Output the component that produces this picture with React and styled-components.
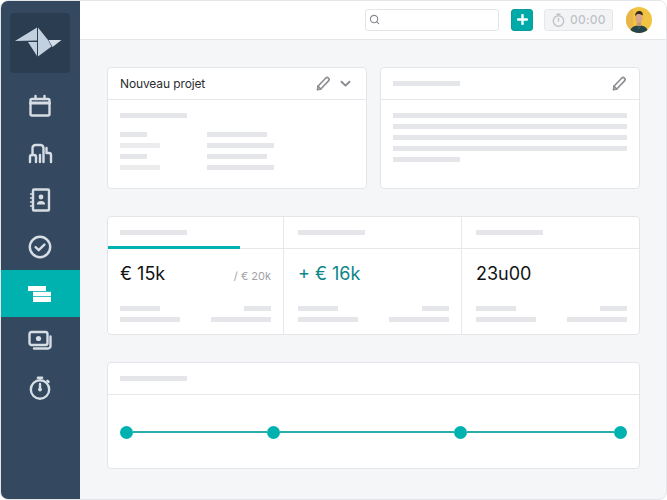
import React from "react";
import styled, { createGlobalStyle } from "styled-components";
import { Search } from "lucide-react";

const Global = createGlobalStyle`
  * { box-sizing: border-box; }
  html, body { margin: 0; padding: 0; background: #fff; }
  body { font-family: Inter, "Liberation Sans", sans-serif; }
`;

const Frame = styled.div`
  width: 667px; height: 500px; display: flex;
  border: 1px solid #e3e5e9; border-radius: 8px; overflow: hidden; background: #f5f6f8;
`;
const Sidebar = styled.nav`
  width: 79px; flex: none; background: #34495f; display: flex; flex-direction: column; padding-top: 12px;
`;
const LogoBox = styled.div`
  width: 60px; height: 60px; margin: 0 0 9px 9px; border-radius: 4px; background: #2b3d50;
  display: flex; align-items: center; justify-content: center;
`;
const NavItem = styled.div`
  height: 47px; display: flex; align-items: center; justify-content: center; padding-right: 1px;
  color: ${p => (p.$active ? "#fff" : "#d6dde5")};
  background: ${p => (p.$active ? "#00b2af" : "transparent")};
`;
const Main = styled.div`flex: 1; min-width: 0; display: flex; flex-direction: column;`;
const Topbar = styled.header`
  height: 39px; flex: none; background: #fff; border-bottom: 1px solid #e3e5e9;
  display: flex; align-items: center; padding: 0 14px 1px 285px;
`;
const SearchBox = styled.div`
  width: 134px; height: 22px; border: 1px solid #e3e5e9; border-radius: 3px; background: #fff;
  display: flex; align-items: center; padding-left: 3px; color: #85888d;
`;
const AddButton = styled.div`
  width: 22px; height: 22px; margin-left: 12px; border-radius: 3px; background: #00aaa8;
  border: 1px solid #0a9c9b; display: flex; align-items: center; justify-content: center;
`;
const Timer = styled.div`
  width: 69px; height: 22px; margin-left: 11px; border-radius: 3px; background: #f3f4f6;
  border: 1px solid #e5e7ea; display: flex; align-items: center; gap: 5px; padding-left: 7px;
  font-size: 12px; color: #c0c3c7; letter-spacing: 0.2px; font-weight: 500;
`;
const Avatar = styled.div`width: 26px; height: 26px; margin-left: 13px; flex: none; border-radius: 50%; overflow: hidden;`;

const Content = styled.main`flex: 1; padding: 27px 26px 0 27px; display: flex; flex-direction: column; gap: 27px;`;
const TwoCards = styled.div`display: grid; grid-template-columns: 260px 260px; gap: 13px;`;
const Card = styled.section`
  background: #fff; border: 1px solid #e3e5e9; border-radius: 4px; height: ${p => p.$h}px;
  display: flex; flex-direction: column; overflow: hidden;
`;
const CardHeader = styled.div`
  height: 32px; flex: none; border-bottom: 1px solid #e6e8eb; display: flex; align-items: center;
  padding: 0 ${p => p.$tight ? 15 : 12}px 0 12px; justify-content: space-between; gap: 9px;
`;
const Title = styled.h2`margin: 0; font-size: 12px; font-weight: 400; letter-spacing: -0.12px; color: #2a2d31; flex: 1;`;
const Bar = styled.div`
  height: 5px; width: ${p => p.$w ? `${p.$w}px` : "100%"}; background: ${p => p.$light ? "#ececee" : "#e5e6e9"}; flex: none;
`;
const CardBody = styled.div`padding: 13px 12px; display: flex; flex-direction: column; gap: 6px;`;
const DetailGrid = styled.div`display: grid; grid-template-columns: 87px 1fr; margin-top: 8px; row-gap: 6px;`;

const Stats = styled.div`display: grid; grid-template-columns: 176px 178px 1fr; flex: 1;`;
const Stat = styled.div`
  border-right: ${p => p.$last ? "none" : "1px solid #e6e8eb"}; display: flex; flex-direction: column;
`;
const StatHeader = styled.div`
  height: 32px; position: relative; border-bottom: 1px solid #e6e8eb; display: flex; align-items: center;
  padding-left: ${p => p.$first ? 12 : 14}px;
`;
const Progress = styled.div`
  position: absolute; left: 0; bottom: -1px; height: 3px; background: #00b2af;
`;
const StatBody = styled.div`
  flex: 1; padding: 14px 12px 11px ${p => p.$first ? 12 : 14}px; display: flex; flex-direction: column;
`;
const ValueRow = styled.div`display: flex; justify-content: space-between; align-items: baseline; height: 23px;`;
const Value = styled.div`
  font-size: 18px; line-height: 22px; color: ${p => p.$accent ? "#0c8688" : "#111315"}; font-weight: 400;
`;
const Budget = styled.div`font-size: 11px; color: #a0a2a6;`;
const FootRow = styled.div`display: flex; justify-content: space-between; margin-top: ${p => p.$mt}px;`;

const Stepper = styled.div`flex: 1; display: flex; align-items: center; padding: 1px 12px 0 12px;`;
const Dot = styled.div`width: 13px; height: 13px; border-radius: 50%; background: #00b2af; flex: none;`;
const Segment = styled.div`height: 2px; flex: ${p => p.$grow} 0 0; background: #2aaeab;`;

const I = ({ children, s = 26 }) => (
  <svg width={s} height={s} viewBox="0 0 26 26" fill="none" stroke="currentColor" strokeWidth="2.4" strokeLinecap="round" strokeLinejoin="round">{children}</svg>
);

const Logo = () => (
  <svg width="50" height="32" viewBox="0 0 50 32" fill="#c3d0df">
    <polygon points="0,14 22,0.5 22,13.6 0,14" />
    <polygon points="23,0.5 33,13 36.5,19.5 23,29.5" />
    <polygon points="13,15 22,15 22,29" />
    <polygon points="33.5,13 46.5,13 37.5,20" fill="#d3dde8" />
  </svg>
);

const Pencil = () => (
  <svg width="16" height="16" viewBox="0 0 16 16" fill="none" stroke="#8b8d92" strokeWidth="1.6" strokeLinejoin="round" strokeLinecap="round">
    <path d="M2.4 13.8 L2.9 10.2 L10.6 2.2 a1.9 1.9 0 0 1 2.9 2.7 L5.8 13 Z" />
    <path d="M2.9 10.2 L5.8 13" />
  </svg>
);
const Chevron = () => (
  <svg width="11" height="8" viewBox="0 0 11 8" fill="none" stroke="#8b8d92" strokeWidth="2" strokeLinecap="round" strokeLinejoin="round">
    <path d="M1.5 1.8 L5.5 5.6 L9.5 1.8" />
  </svg>
);

const icons = [
  <I key="cal"><rect x="3.500" y="6" width="19" height="16.500" rx="1.500" /><path d="M3.500 10h19" strokeWidth="3" /><path d="M8.500 3v3M17.500 3v3" /></I>,
  <I key="bld"><path d="M3 22v-5a2 2 0 0 1 2-2h2a2 2 0 0 1 2 2v5" /><path d="M5.500 15V8a3 3 0 0 1 3-3h5a3 3 0 0 1 3 3v14" /><path d="M13 15v7" /><path d="M19.500 8v5h2.500a2 2 0 0 1 2 2v7" /></I>,
  <I key="book"><rect x="6" y="2.500" width="16" height="21" rx="1" /><circle cx="14" cy="10" r="2.400" fill="currentColor" stroke="none" /><path d="M9.800 17.500c0-2.600 1.900-3.600 4.200-3.600s4.200 1 4.200 3.600z" fill="currentColor" stroke="none" /><path d="M3.500 7h3M3.500 11h3M3.500 15h3M3.500 19h3" strokeWidth="1.400" /></I>,
  <I key="chk"><circle cx="13" cy="13" r="10.200" /><path d="M8.600 13.200l3.100 3 5.700-5.600" /></I>,
  <svg key="bars" width="24" height="16" viewBox="0 0 24 16" fill="#fff"><rect x="0" y="0" width="18" height="5" /><rect x="5" y="5.800" width="18" height="4.400" /><rect x="5" y="11" width="18" height="5" /></svg>,
  <I key="cash"><rect x="2.500" y="4" width="18" height="13" rx="2" /><circle cx="11.500" cy="10.500" r="2.600" fill="currentColor" stroke="none" /><path d="M23.500 8.500V18a2.500 2.500 0 0 1-2.500 2.500H7" /></I>,
  <I key="sw"><circle cx="13" cy="14.500" r="9.200" /><path d="M11 2.800h4" strokeWidth="2.600" /><path d="M20.500 5.800l1 1" strokeWidth="2.600" /><path d="M13 9v5" /><circle cx="13" cy="14.500" r="1.900" fill="currentColor" stroke="none" /></I>,
];

const AvatarArt = () => (
  <svg width="26" height="26" viewBox="0 0 26 26">
    <rect width="26" height="26" fill="#f0c341" />
    <path d="M0 0h7v26H0z" fill="#e8b548" />
    <path d="M4 26c0-5 3-7.500 9-7.500s9 2.500 9 7.500z" fill="#24444b" />
    <rect x="11" y="14" width="4" height="5" fill="#c79478" />
    <ellipse cx="13" cy="11" rx="3.600" ry="4.800" fill="#d8a78a" />
    <path d="M9.200 9c-.4-3 1.800-5 4.200-5s3.800 1.600 3.400 4.600c-1.400-1.500-5-2-6-1.200z" fill="#3a2d22" />
    <path d="M11 19.500l2 3 2-3" fill="#3c5a5e" />
  </svg>
);

const StatBlock = ({ first, last, value, accent, budget, progress }) => (
  <Stat $last={last}>
    <StatHeader $first={first}>
      <Bar $w={67} />
      {progress ? <Progress style={{ width: progress }} /> : null}
    </StatHeader>
    <StatBody $first={first}>
      <ValueRow>
        <Value $accent={accent}>{value}</Value>
        {budget ? <Budget>{budget}</Budget> : null}
      </ValueRow>
      <FootRow $mt={20}><Bar $w={40} /><Bar $w={27} /></FootRow>
      <FootRow $mt={6}><Bar $w={60} /><Bar $w={60} /></FootRow>
    </StatBody>
  </Stat>
);

export default function App() {
  return (
    <>
      <Global />
      <Frame>
        <Sidebar>
          <LogoBox><Logo /></LogoBox>
          {icons.map((icon, i) => <NavItem key={i} $active={i === 4}>{icon}</NavItem>)}
        </Sidebar>
        <Main>
          <Topbar>
            <SearchBox><Search size={11} strokeWidth={2.4} /></SearchBox>
            <AddButton>
              <svg width="11" height="11" viewBox="0 0 11 11" stroke="#fff" strokeWidth="2.4" strokeLinecap="round"><path d="M5.500 1v9M1 5.500h9" /></svg>
            </AddButton>
            <Timer>
              <svg width="13" height="14" viewBox="0 0 13 14" fill="none" stroke="#c0c3c7" strokeWidth="1.400" strokeLinecap="round"><circle cx="6.500" cy="8" r="5.200" /><path d="M5 1.200h3M6.500 5.500v2.500" /></svg>
              00:00
            </Timer>
            <Avatar><AvatarArt /></Avatar>
          </Topbar>
          <Content>
            <TwoCards>
              <Card $h={122}>
                <CardHeader $tight>
                  <Title>Nouveau projet</Title>
                  <Pencil /><Chevron />
                </CardHeader>
                <CardBody>
                  <Bar $w={67} />
                  <DetailGrid>
                    <Bar $w={27} /><Bar $w={60} />
                    <Bar $w={40} $light /><Bar $w={67} />
                    <Bar $w={27} /><Bar $w={60} />
                    <Bar $w={40} $light /><Bar $w={67} />
                  </DetailGrid>
                </CardBody>
              </Card>
              <Card $h={122}>
                <CardHeader>
                  <Bar $w={67} />
                  <Pencil />
                </CardHeader>
                <CardBody>
                  <Bar /><Bar /><Bar /><Bar /><Bar $w={67} />
                </CardBody>
              </Card>
            </TwoCards>
            <Card $h={119}>
              <Stats>
                <StatBlock first value="€ 15k" budget="/ € 20k" progress={132} />
                <StatBlock value="+ € 16k" accent />
                <StatBlock last value="23u00" />
              </Stats>
            </Card>
            <Card $h={107}>
              <CardHeader><Bar $w={67} /></CardHeader>
              <Stepper>
                <Dot /><Segment $grow={134} /><Dot /><Segment $grow={174} /><Dot /><Segment $grow={147} /><Dot />
              </Stepper>
            </Card>
          </Content>
        </Main>
      </Frame>
    </>
  );
}
